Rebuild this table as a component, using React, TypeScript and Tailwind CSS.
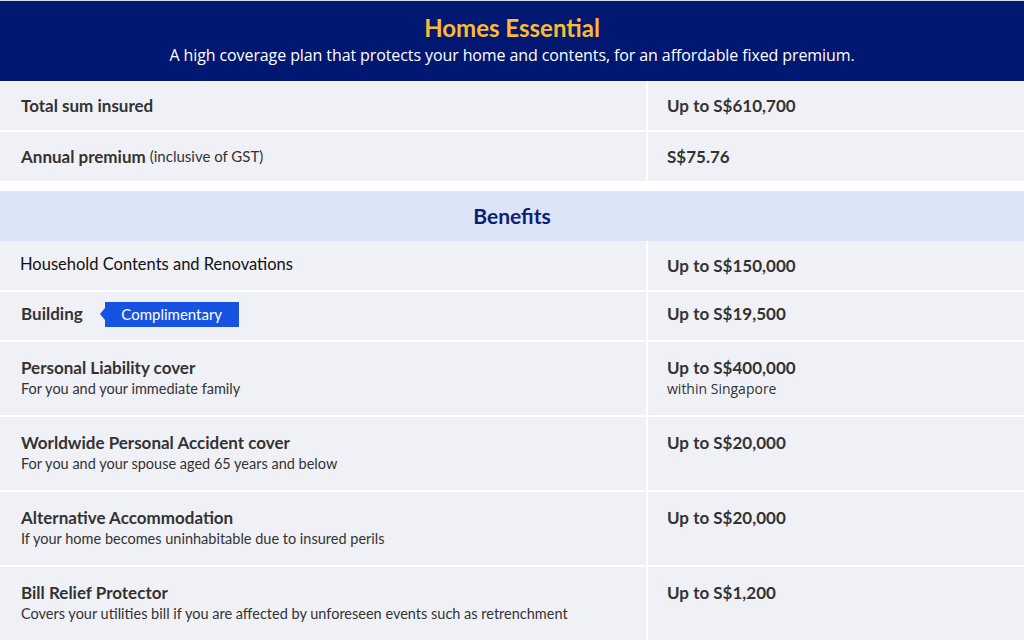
export default function App() {
  const benefits = [
    {
      title: "Personal Liability cover",
      desc: "For you and your immediate family",
      value: "Up to S$400,000",
      note: "within Singapore",
    },
    {
      title: "Worldwide Personal Accident cover",
      desc: "For you and your spouse aged 65 years and below",
      value: "Up to S$20,000",
    },
    {
      title: "Alternative Accommodation",
      desc: "If your home becomes uninhabitable due to insured perils",
      value: "Up to S$20,000",
    },
    {
      title: "Bill Relief Protector",
      desc: "Covers your utilities bill if you are affected by unforeseen events such as retrenchment",
      value: "Up to S$1,200",
    },
  ];

  const head = "font-['Lato',sans-serif]";
  const body = "font-['Lato',sans-serif]";

  return (
    <div className="w-[1024px] h-[640px] overflow-hidden bg-white border-t border-[#d9dbe3]">
      <div className="h-[80px] bg-[#001871] flex flex-col items-center pt-[12px]">
        <h1 className={`${head} text-[24px] leading-[30px] font-bold text-[#fbb934]`}>
          Homes Essential
        </h1>
        <p className="font-['Open_Sans',sans-serif] text-[16px] leading-[24px] text-white tracking-[-0.1px]">
          A high coverage plan that protects your home and contents, for an affordable fixed premium.
        </p>
      </div>

      <div className="flex flex-col gap-[2px]">
        <div className="grid grid-cols-[646px_1fr] gap-x-[2px] h-[49px]">
          <div className={`${head} bg-[#f0f1f7] flex items-center pl-[21px] text-[17px] font-bold text-[#333]`}>
            Total sum insured
          </div>
          <div className={`${head} bg-[#f0f1f7] flex items-center pl-[19px] text-[17px] font-bold text-[#333]`}>
            Up to S$610,700
          </div>
        </div>
        <div className="grid grid-cols-[646px_1fr] gap-x-[2px] h-[49px]">
          <div className={`${head} bg-[#f0f1f7] flex items-center pl-[21px] text-[17px] text-[#333]`}>
            <span className="font-bold">Annual premium</span>
            <span className={`${body} text-[15px] ml-[4px]`}>(inclusive of GST)</span>
          </div>
          <div className={`${head} bg-[#f0f1f7] flex items-center pl-[19px] text-[17px] font-bold text-[#333]`}>
            S$75.76
          </div>
        </div>
      </div>

      <div className="mt-[10px] h-[50px] bg-[#dce4f8] flex items-center justify-center">
        <h2 className={`${head} text-[21px] font-bold text-[#0b1f78]`}>Benefits</h2>
      </div>

      <div className="flex flex-col gap-[2px]">
        <div className="grid grid-cols-[646px_1fr] gap-x-[2px] h-[49px]">
          <div className={`${head} bg-[#f0f1f7] flex items-center pl-[20px] pb-[2px] text-[16.5px] text-[#111]`}>
            Household Contents and Renovations
          </div>
          <div className={`${head} bg-[#f0f1f7] flex items-center pl-[19px] text-[17px] font-bold text-[#333]`}>
            Up to S$150,000
          </div>
        </div>
        <div className="grid grid-cols-[646px_1fr] gap-x-[2px] h-[48px]">
          <div className="bg-[#f0f1f7] flex items-center pl-[21px] pb-[4px]">
            <span className={`${head} text-[17px] font-bold text-[#333]`}>Building</span>
            <span className="ml-[17px] flex items-center">
              <span className="w-0 h-0 border-y-[6px] border-y-transparent border-r-[5px] border-r-[#1553e0]" />
              <span className={`${body} bg-[#1553e0] text-white text-[15px] w-[134px] h-[25px] flex items-center justify-center`}>
                Complimentary
              </span>
            </span>
          </div>
          <div className={`${head} bg-[#f0f1f7] flex items-center pl-[19px] pb-[4px] text-[17px] font-bold text-[#333]`}>
            Up to S$19,500
          </div>
        </div>
        {benefits.map((b) => (
          <div key={b.title} className="grid grid-cols-[646px_1fr] gap-x-[2px] h-[73px]">
            <div className="bg-[#f0f1f7] pl-[21px] pt-[15px]">
              <div className={`${head} text-[17px] leading-[22px] font-bold text-[#333]`}>{b.title}</div>
              <div className={`${body} text-[14.5px] leading-[20px] text-[#333]`}>{b.desc}</div>
            </div>
            <div className="bg-[#f0f1f7] pl-[19px] pt-[15px]">
              <div className={`${head} text-[17px] leading-[22px] font-bold text-[#333]`}>{b.value}</div>
              {b.note && (
                <div className="font-['Open_Sans',sans-serif] text-[14px] leading-[20px] text-[#333]">{b.note}</div>
              )}
            </div>
          </div>
        ))}
      </div>
    </div>
  );
}
